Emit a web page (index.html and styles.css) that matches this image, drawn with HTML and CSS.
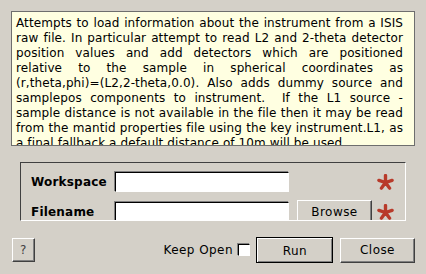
FILE: index.html
```html
<!DOCTYPE html>
<html lang="en">
<head>
    <meta charset="UTF-8">
    <title>LoadInstrumentFromRaw</title>
    <link rel="stylesheet" href="styles.css">
</head>
<body>
    <div class="dialog">
        <div class="desc">
            <p class="desc-body">Attempts to load information about the instrument from a ISIS<br>raw file. In particular attempt to read L2 and 2-theta detector<br>position values and add detectors which are positioned<br>relative to the sample in spherical coordinates as<br>(r,theta,phi)=(L2,2-theta,0.0). Also adds dummy source and<br>samplepos components to instrument.&nbsp; If the L1 source -<br>sample distance is not available in the file then it may be read<br>from the mantid properties file using the key instrument.L1, as</p>
            <p>a final fallback a default distance of 10m will be used.</p>
        </div>

        <div class="props">
            <div class="prop-grid">
                <label class="prop-label">Workspace</label>
                <input type="text" class="prop-input">
                <span></span>
                <svg class="req" viewBox="0 0 16 16"><path d="M8 8V1.5M8 8L14.2 6M8 8L11.8 13.3M8 8L4.2 13.3M8 8L1.8 6"/></svg>

                <label class="prop-label">Filename</label>
                <input type="text" class="prop-input">
                <button class="btn browse-btn">Browse</button>
                <svg class="req" viewBox="0 0 16 16"><path d="M8 8V1.5M8 8L14.2 6M8 8L11.8 13.3M8 8L4.2 13.3M8 8L1.8 6"/></svg>
            </div>
        </div>

        <div class="buttons">
            <button class="btn help-btn">?</button>
            <div class="spacer"></div>
            <label class="keep-open">Keep Open <span class="check"></span></label>
            <button class="btn run-btn">Run</button>
            <button class="btn close-btn">Close</button>
        </div>
    </div>
</body>
</html>
```

FILE: styles.css
```css
* {
    margin: 0;
    padding: 0;
    box-sizing: border-box;
    font-family: 'DejaVu Sans', sans-serif;
    letter-spacing: 0.45px;
}

body {
    background-color: #d4d0c8;
    color: #000;
    width: 426px;
    height: 274px;
    overflow: hidden;
    font-size: 12px;
}

.dialog {
    padding: 11px 11px 0 11px;
}

.desc {
    width: 404px;
    height: 135px;
    overflow: hidden;
    background: #ffffe1;
    border: 1px solid #6e6e6e;
    padding: 4px 11px 0 4px;
    line-height: 15px;
    font-size: 12px;
}

.desc p {
    letter-spacing: 0.1px;
    white-space: nowrap;
}

.desc-body {
    text-align: justify;
    text-align-last: justify;
}

.props {
    margin: 16px 0 0 9px;
    width: 386px;
    height: 59px;
    overflow: hidden;
    border: 1px solid;
    border-color: #404040 #fff #fff #404040;
    padding: 9px 0 0 10px;
}

.prop-grid {
    display: grid;
    grid-template-columns: 76px 174px 75px 22px;
    column-gap: 8px;
    row-gap: 8px;
    align-items: center;
}

.prop-label {
    font-weight: bold;
    font-size: 12px;
    letter-spacing: 0.2px;
}

.prop-input {
    height: 20px;
    width: 174px;
    background: #fff;
    border: 1px solid;
    border-color: #000 #fff #fff #000;
    box-shadow: -1px -1px 0 #808080;
    font-size: 12px;
}

.req {
    width: 17px;
    height: 17px;
    margin-left: -3px;
    fill: none;
    stroke: #b83a2a;
    stroke-width: 3.2;
    stroke-linecap: round;
}

.btn {
    background: #d4d0c8;
    border: 1px solid;
    border-color: #fff #404040 #404040 #fff;
    box-shadow: inset -1px -1px 0 #808080;
    font-size: 12px;
    color: #000;
}

.browse-btn {
    height: 24px;
}

.buttons {
    display: flex;
    align-items: center;
    margin-top: 16px;
    padding-left: 1px;
}

.help-btn {
    width: 23px;
    height: 24px;
    color: #404040;
}

.spacer {
    flex: 1;
}

.keep-open {
    display: flex;
    align-items: center;
    gap: 5px;
    color: #000;
}

.check {
    width: 12px;
    height: 12px;
    background: #fff;
    border: 1px solid;
    border-color: #000 #fff #fff #000;
    box-shadow: -1px -1px 0 #808080;
}

.run-btn {
    width: 77px;
    height: 26px;
    margin-left: 6px;
    outline: 1px solid #000;
    outline-offset: -1px;
    border-width: 2px 1px 1px 2px;
}

.close-btn {
    width: 75px;
    height: 25px;
    margin-left: 7px;
}
```
